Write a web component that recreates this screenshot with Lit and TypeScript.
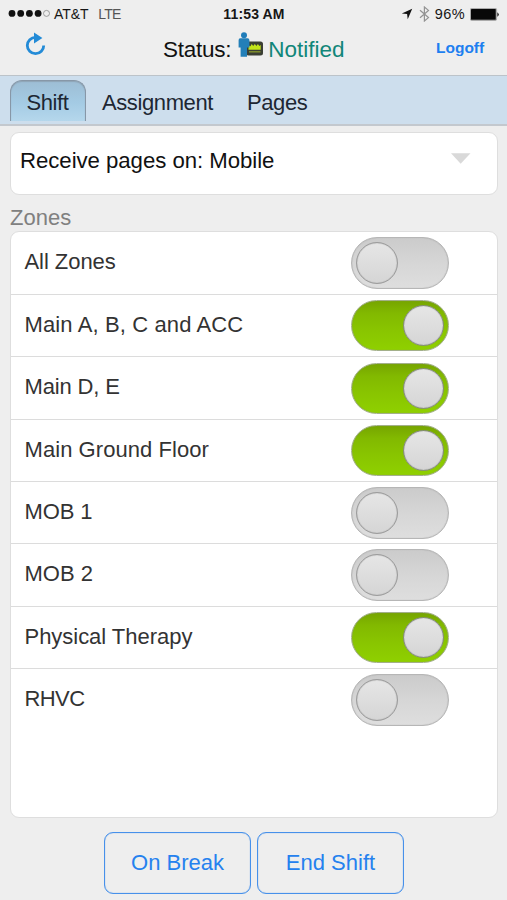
import { LitElement, html, css, svg } from "lit";
import { customElement, property } from "lit/decorators.js";
import { classMap } from "lit/directives/class-map.js";

@customElement("zone-switch")
class ZoneSwitch extends LitElement {
  @property({ type: Boolean }) on = false;

  static styles = css`
    :host { display: block; }
    .track {
      box-sizing: border-box;
      width: 98px;
      height: 52px;
      padding: 4px 4px 0;
      border: 1px solid #b6b6b6;
      border-radius: 26px;
      display: flex;
      justify-content: flex-start;
      background: linear-gradient(#cbcbcb, #d6d6d6 50%, #dedede);
      box-shadow: inset 0 0 1px #aaa;
    }
    .track.on {
      justify-content: flex-end;
      height: 51px;
      margin-top: 0.6px;
      padding-right: 4px;
      border-color: #a3b08a;
      background: linear-gradient(#76a500, #82b900 25%, #89c500 60%, #8fd000);
      box-shadow: inset 0 0 1px #8a9a60;
    }
    .knob {
      box-sizing: border-box;
      width: 42px;
      height: 42px;
      border: 1px solid #9c9c9c;
      border-radius: 50%;
      background: linear-gradient(#e6e6e6, #d5d5d5);
      box-shadow: inset 0 0 1px #888;
    }
    .on .knob { width: 41px; height: 41px; border-color: #868e7c; }
  `;

  render() {
    return html`<div class=${classMap({ track: true, on: this.on })}><div class="knob"></div></div>`;
  }
}

@customElement("app-root")
class AppRoot extends LitElement {
  static styles = css`
    :host {
      display: flex;
      flex-direction: column;
      box-sizing: border-box;
      height: 900px;
      background: #eeeeee;
      color: #333;
      font-family: "Liberation Sans", Arial, sans-serif;
      font-size: 22px;
      line-height: 26px;
      white-space: nowrap;
      overflow: hidden;
    }
    svg { display: block; flex: none; }
    .statusbar {
      display: grid;
      grid-template-columns: 1fr auto 1fr;
      height: 28px;
      padding: 0 7px 0 8px;
      align-items: center;
      font-size: 14px;
      line-height: 28px;
      color: #161616;
    }
    .carrier { display: flex; align-items: center; }
    .att { margin-left: 4px; letter-spacing: -0.1px; }
    .lte { margin-left: 10px; color: #555; letter-spacing: -0.8px; }
    .clock { font-weight: bold; font-size: 14px; letter-spacing: 0.15px; }
    .power { display: flex; align-items: center; justify-content: flex-end; }
    .bluetooth { margin-left: 6px; }
    .pct { margin: 0 5px 0 5px; font-size: 14.5px; letter-spacing: 0.4px; }
    .header {
      display: flex;
      align-items: flex-start;
      border-bottom: 1px solid #bcc3c9;
      box-sizing: border-box;
      height: 48px;
    }
    .refresh { margin: 4px 0 0 25px; }
    .status { display: flex; width: 184px; margin: 9px 0 0 117px; font-size: 22.5px; color: #111; }
    .state { letter-spacing: -0.25px; }
    .person { margin: -5px 4px 0 7px; }
    .notified { color: #118679; letter-spacing: -0.02px; }
    .logoff { margin: 7px 0 0 89px; font-size: 15.5px; font-weight: bold; color: #1d7ff0; }
    .tabs {
      display: flex;
      box-sizing: border-box;
      height: 50px;
      padding: 4px 0 0 10px;
      background: #cddeed;
      border-bottom: 2px solid #c3c8ce;
      color: #1d2733;
      font-size: 22px;
      letter-spacing: -0.4px;
      line-height: 45px;
    }
    .tab { margin-right: 34px; }
    .tab.active {
      box-sizing: border-box;
      width: 76px;
      height: 41px;
      line-height: 43px;
      text-align: center;
      padding-right: 1px;
      margin-right: 16px;
      border: 1px solid #8797a7;
      border-bottom: none;
      border-radius: 12px 12px 0 0;
      background: linear-gradient(#9dbdd4, #a4cbe4 55%, #b5d7ec);
      box-shadow: inset 0 1px 1px #8fa5b6;
    }
    .card {
      box-sizing: border-box;
      margin: 0 9px 0 10px;
      background: #fff;
      border: 1px solid #dedede;
      border-radius: 9px;
    }
    .select {
      display: flex;
      justify-content: space-between;
      margin-top: 6px;
      height: 63px;
      padding: 15px 26px 0 9px;
      font-size: 22.2px;
      letter-spacing: -0.04px;
      color: #111;
    }
    .arrow { margin-top: 5px; }
    .label { height: 36px; padding: 10px 0 0; margin-left: 10px; box-sizing: border-box; color: #808080; }
    .list { height: 587px; }
    .row {
      display: flex;
      box-sizing: border-box;
      justify-content: space-between;
      height: 62.4px;
      padding: 5px 48px 0 13.5px;
      border-bottom: 1px solid #dcdcdc;
    }
    .row:first-child { height: 62.8px; }
    .row:last-child { border-bottom: none; }
    .name { margin-top: 12px; }
    .actions { display: flex; gap: 6px; padding: 14px 0 0 104px; }
    .action {
      box-sizing: border-box;
      width: 147px;
      height: 62px;
      border: 1px solid #4690ea;
      border-radius: 9px;
      box-shadow: inset 0 0 1px #4690ea;
      text-align: center;
      line-height: 59px;
      color: #2581ee;
    }
  `;

  private zones: [string, boolean, number][] = [
    ["All Zones", false, -0.05],
    ["Main A, B, C and ACC", true, 0.12],
    ["Main D, E", true, -0.15],
    ["Main Ground Floor", true, 0.06],
    ["MOB 1", false, -0.1],
    ["MOB 2", false, 0],
    ["Physical Therapy", true, -0.03],
    ["RHVC", false, -0.6],
  ];

  render() {
    return html`
      <div class="statusbar">
        <div class="carrier">
          <svg width="42" height="10" viewBox="0 0 42 10">
            ${[4, 12.7, 21.4, 30.1].map((x) => svg`<circle cx=${x} cy="4.4" r="3.4" fill="#111"/>`)}
            <circle cx="38.5" cy="4.4" r="3" fill="none" stroke="#888" stroke-width=".8"/>
          </svg>
          <span class="att">AT&amp;T</span><span class="lte">LTE</span>
        </div>
        <span class="clock">11:53 AM</span>
        <div class="power">
          <svg width="12" height="12" viewBox="0 0 12 12"><path d="M11.2.7 6.7 11.2 6.1 6.1.8 5.4Z" fill="#111"/></svg>
          <svg class="bluetooth" width="11" height="16" viewBox="0 0 11 16"><path d="M1 4.2 9.5 11.6 5.4 15V1L9.5 4.4 1 11.8" fill="none" stroke="#929292" stroke-width="1.2"/></svg>
          <span class="pct">96%</span>
          <svg width="30" height="13" viewBox="0 0 30 13"><rect x=".4" y=".4" width="26.2" height="12" rx="1.2" fill="#ddd" stroke="#777" stroke-width=".6"/><rect x="1" y="1" width="24.8" height="10.8" rx=".5" fill="#080808"/><path d="M27.3 4.2q3 2.3 0 4.6Z" fill="#222"/></svg>
        </div>
      </div>
      <div class="header">
        <svg class="refresh" width="21" height="25" viewBox="0 0 21 25">
          <path d="M10.6 5.3A8.2 8.2 0 1 0 18.7 13.4" fill="none" stroke="#238bd7" stroke-width="2.8"/>
          <path d="M9 .6 17.4 6 9 11.4Z" fill="#238bd7"/>
        </svg>
        <div class="status">
          <span class="state">Status:</span>
          <svg class="person" width="26" height="26" viewBox="0 0 26 26">
            <rect x="8" y="9.6" width="17" height="13.8" rx="2.5" fill="#3b3f34"/>
            <path d="M10.5 17.8V13.5l2 .8 1.2-2.2 1.5 2 1.6-2 1.6 2 1.5-2 1.4 2 1.4-1v4.7Z" fill="#c3e619"/>
            <path d="M11 19.8h11.5" stroke="#83932b" stroke-width="1.4"/>
            <circle cx="6" cy="3.3" r="3" fill="#1f7cb9"/>
            <path d="M2.2 6.2h7.4q1.8 0 1.8 2v7.3H9V24.8H2.6V15.5H.6V8.2Q.6 6.2 2.2 6.2Z" fill="#237fb8"/>
          </svg>
          <span class="notified">Notified</span>
        </div>
        <span class="logoff">Logoff</span>
      </div>
      <div class="tabs">
        <div class="tab active">Shift</div>
        <div class="tab">Assignment</div>
        <div class="tab">Pages</div>
      </div>
      <div class="card select">
        <span>Receive pages on: Mobile</span>
        <svg class="arrow" width="20" height="11" viewBox="0 0 20 11"><path d="M0 .3h19.5L9.7 10.8Z" fill="#d9d9d9"/></svg>
      </div>
      <div class="label">Zones</div>
      <div class="card list">
        ${this.zones.map(
          ([name, on, spacing]) => html`<div class="row">
            <span class="name" style="letter-spacing:${spacing}px">${name}</span>
            <zone-switch ?on=${on}></zone-switch>
          </div>`
        )}
      </div>
      <div class="actions">
        <div class="action">On Break</div>
        <div class="action">End Shift</div>
      </div>
    `;
  }
}
